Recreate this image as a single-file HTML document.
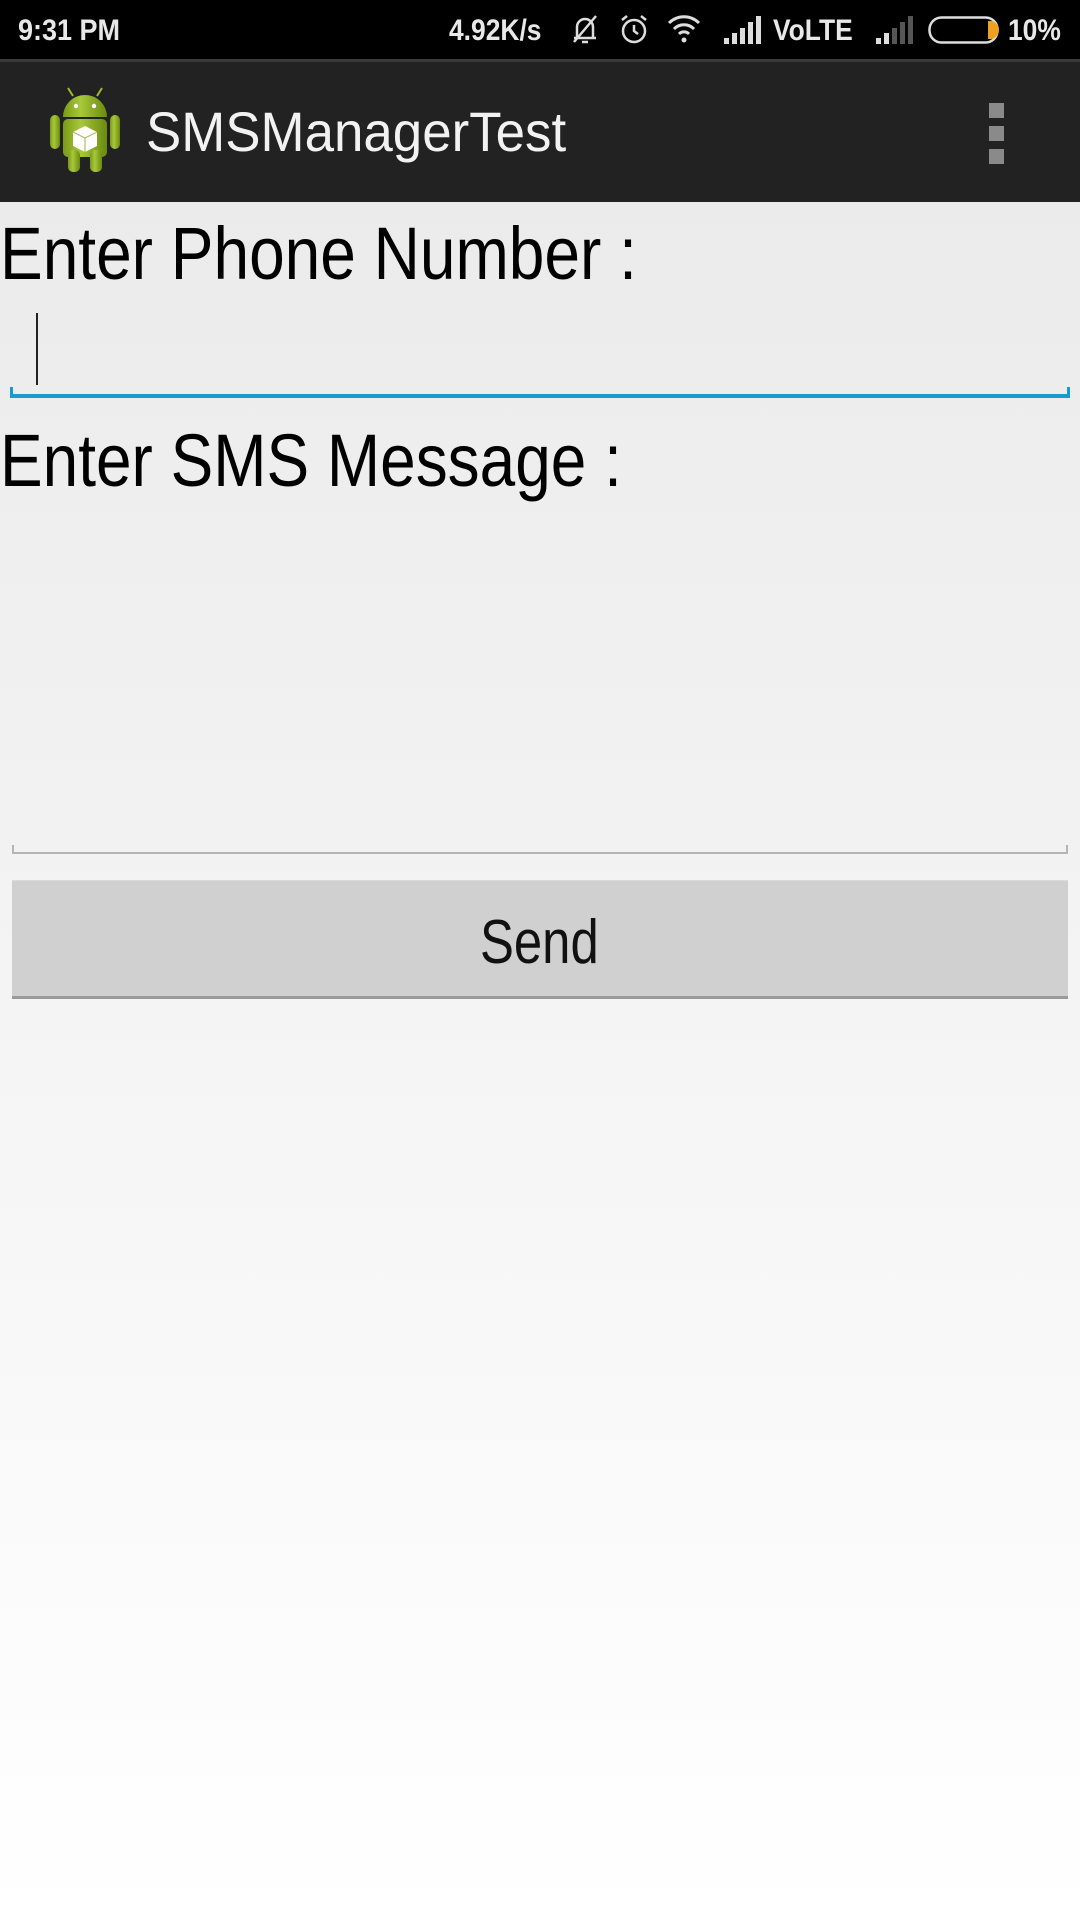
<!DOCTYPE html>
<html><head><meta charset="utf-8">
<style>
html,body{margin:0;padding:0}
body{width:1080px;height:1920px;position:relative;overflow:hidden;font-family:"Liberation Sans",sans-serif;background:linear-gradient(#ebebeb 200px,#f3f3f3 900px,#ffffff 1920px)}
.sb{position:absolute;left:0;top:0;width:1080px;height:59px;background:#000;color:#e8e8e8;font-weight:bold}
.sep{position:absolute;left:0;top:59px;width:1080px;height:3px;background:#3a3a3a}
.ab{position:absolute;left:0;top:62px;width:1080px;height:140px;background:#222}
.t{position:absolute;white-space:nowrap;transform-origin:0 0}
</style></head><body>
<div class="sb">
  <div class="t" style="left:18px;top:14px;font-size:30px;transform:scaleX(0.9)">9:31 PM</div>
  <div class="t" style="left:449px;top:14px;font-size:30px;transform:scaleX(0.88)">4.92K/s</div>
  <svg style="position:absolute;left:568px;top:12px" width="34" height="34" viewBox="0 0 34 34" fill="none" stroke="#ddd" stroke-width="2.5"><path d="M9 26V15a8 8 0 0 1 16 0v11H6h22"/><path d="M14 30h6"/><path d="M6 30L28 4"/></svg>
  <svg style="position:absolute;left:617px;top:12px" width="34" height="34" viewBox="0 0 34 34" fill="none" stroke="#ddd" stroke-width="2.5"><circle cx="17" cy="19" r="11"/><path d="M17 13v6l4 3M5 8l5-4M29 8l-5-4"/></svg>
  <svg style="position:absolute;left:666px;top:12px" width="36" height="34" viewBox="0 0 36 34" fill="none" stroke="#ddd" stroke-width="3"><path d="M3 11a21 21 0 0 1 30 0M8 17a14 14 0 0 1 20 0M13 22a7 7 0 0 1 10 0"/><circle cx="18" cy="28" r="2.5" fill="#ddd" stroke="none"/></svg>
  <svg style="position:absolute;left:724px;top:16px" width="40" height="28" viewBox="0 0 40 28" fill="#ddd"><rect x="0" y="22" width="5" height="6"/><rect x="8" y="17" width="5" height="11"/><rect x="16" y="12" width="5" height="16"/><rect x="24" y="6" width="5" height="22"/><rect x="32" y="0" width="5" height="28"/></svg>
  <div class="t" style="left:773px;top:14px;font-size:30px;transform:scaleX(0.88)">VoLTE</div>
  <svg style="position:absolute;left:876px;top:16px" width="40" height="28" viewBox="0 0 40 28"><rect x="0" y="22" width="5" height="6" fill="#ddd"/><rect x="8" y="17" width="5" height="11" fill="#ddd"/><rect x="16" y="12" width="5" height="16" fill="#555"/><rect x="24" y="6" width="5" height="22" fill="#555"/><rect x="32" y="0" width="5" height="28" fill="#555"/></svg>
  <svg style="position:absolute;left:928px;top:16px" width="72" height="28" viewBox="0 0 72 28"><rect x="1.5" y="1.5" width="68" height="25" rx="12" fill="none" stroke="#ddd" stroke-width="2.5"/><path d="M60 5h2a8 8 0 0 1 0 18h-2z" fill="#f0a020"/></svg>
  <div class="t" style="left:1008px;top:14px;font-size:30px;transform:scaleX(0.88)">10%</div>
</div>
<div class="sep"></div>
<div class="ab">
  <svg style="position:absolute;left:48px;top:22px" width="74" height="92" viewBox="48 84 74 92">
    <defs><linearGradient id="g" x1="0" x2="1"><stop offset="0" stop-color="#7a9a18"/><stop offset=".4" stop-color="#a8c83a"/><stop offset="1" stop-color="#6a8a10"/></linearGradient></defs>
    <path d="M73 96l-5-8M97 96l5-8" stroke="#9cbc30" stroke-width="2"/>
    <path d="M63 117a22 22 0 0 1 44 0z" fill="url(#g)"/>
    <circle cx="76" cy="106" r="2.2" fill="#fff"/><circle cx="94" cy="106" r="2.2" fill="#fff"/>
    <rect x="63" y="119" width="44" height="38" rx="5" fill="url(#g)"/>
    <rect x="50" y="115" width="10" height="34" rx="5" fill="url(#g)"/>
    <rect x="110" y="115" width="10" height="34" rx="5" fill="url(#g)"/>
    <rect x="68" y="150" width="12" height="22" rx="5" fill="url(#g)"/>
    <rect x="90" y="150" width="12" height="22" rx="5" fill="url(#g)"/>
    <path d="M85 126l12 6v14l-12 6-12-6v-14z" fill="#fff"/>
    <path d="M73 132l12 6 12-6M85 138v14" stroke="#a8c060" stroke-width="1.2" fill="none"/>
  </svg>
  <div class="t" style="left:146px;top:37px;font-size:56px;color:#f2f2f2;transform:scaleX(0.944)">SMSManagerTest</div>
  <div style="position:absolute;left:989px;top:41px;width:15px;height:15px;background:#8a8a8a"></div>
  <div style="position:absolute;left:989px;top:64px;width:15px;height:15px;background:#8a8a8a"></div>
  <div style="position:absolute;left:989px;top:87px;width:15px;height:15px;background:#8a8a8a"></div>
</div>
<div class="t" style="left:0;top:211px;font-size:74px;color:#000;transform:scaleX(0.865)">Enter Phone Number :</div>
<div style="position:absolute;left:36px;top:313px;width:2px;height:72px;background:#222"></div>
<div style="position:absolute;left:10px;top:394px;width:1060px;height:4px;background:#1b9ad1"></div>
<div style="position:absolute;left:10px;top:387px;width:3px;height:11px;background:#1b9ad1"></div>
<div style="position:absolute;left:1067px;top:387px;width:3px;height:11px;background:#1b9ad1"></div>
<div class="t" style="left:0;top:418px;font-size:74px;color:#000;transform:scaleX(0.864)">Enter SMS Message :</div>
<div style="position:absolute;left:12px;top:852px;width:1056px;height:2px;background:#b4b4b4"></div>
<div style="position:absolute;left:12px;top:845px;width:2px;height:9px;background:#b4b4b4"></div>
<div style="position:absolute;left:1066px;top:845px;width:2px;height:9px;background:#b4b4b4"></div>
<div style="position:absolute;left:12px;top:880px;width:1056px;height:119px;background:#d0d0d0;border-bottom:3px solid #9a9a9a;border-top:1px solid #dadada;box-sizing:border-box"></div>
<div class="t" style="left:480px;top:907px;font-size:62px;color:#111;transform:scaleX(0.82)">Send</div>
</body></html>
